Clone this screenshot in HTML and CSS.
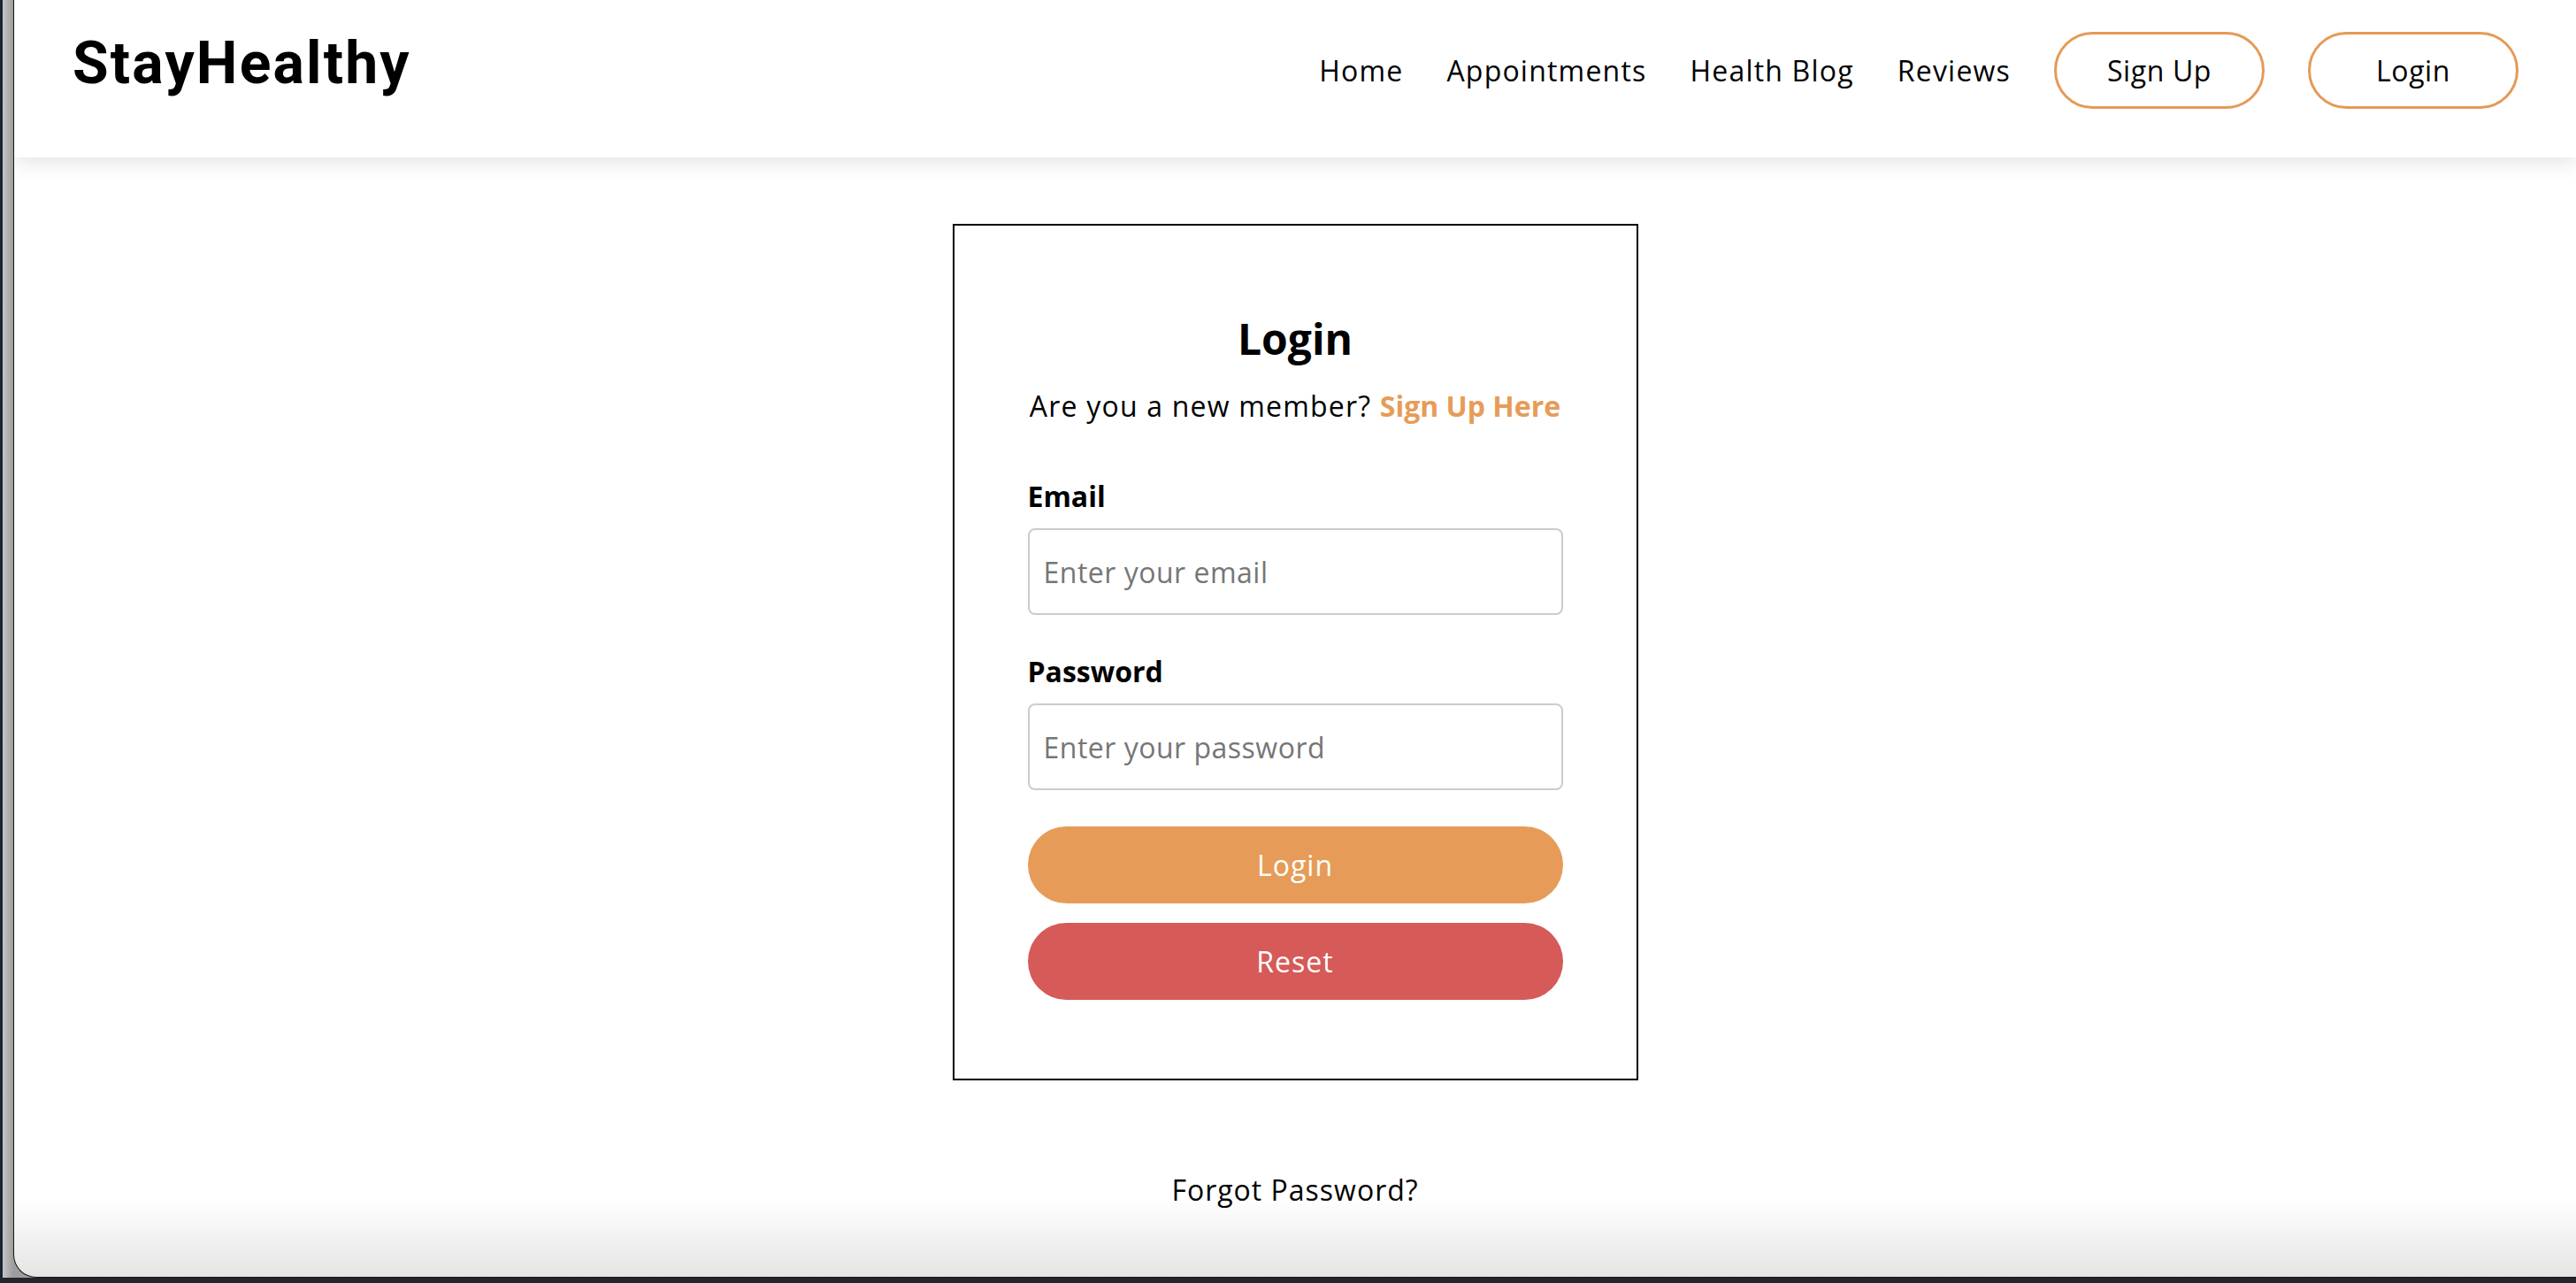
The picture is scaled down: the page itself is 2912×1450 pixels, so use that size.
FILE: index.html
```html
<!DOCTYPE html>
<html lang="en">
<head>
<meta charset="utf-8">
<title>StayHealthy - Login</title>
<link rel="stylesheet" href="styles.css">
</head>
<body>
<div class="screen">
  <div class="window">
    <nav class="nav">
      <div class="logo">StayHealthy</div>
      <ul class="nav-links">
        <li><a href="#" class="nav-link">Home</a></li>
        <li><a href="#" class="nav-link">Appointments</a></li>
        <li><a href="#" class="nav-link">Health Blog</a></li>
        <li><a href="#" class="nav-link">Reviews</a></li>
        <li><a href="#" class="nav-btn">Sign Up</a></li>
        <li><a href="#" class="nav-btn">Login</a></li>
      </ul>
    </nav>
    <main class="main">
      <div class="card">
        <h2 class="title">Login</h2>
        <p class="sub">Are you a new member? <a href="#" class="sub-link">Sign Up Here</a></p>
        <form class="form">
          <label class="label" for="email">Email</label>
          <input class="input" id="email" type="email" placeholder="Enter your email">
          <label class="label label-pw" for="password">Password</label>
          <input class="input" id="password" type="password" placeholder="Enter your password">
          <button type="button" class="btn btn-login">Login</button>
          <button type="reset" class="btn btn-reset">Reset</button>
        </form>
      </div>
      <a href="#" class="forgot">Forgot Password?</a>
    </main>
  </div>
</div>
</body>
</html>
```
FILE: styles.css
```css
html, body {
  margin: 0;
  padding: 0;
}
body {
  background: #23252c;
  height: 1450px;
  overflow: hidden;
  font-family: "Open Sans", "Noto Sans", sans-serif;
  color: #000;
}
.screen {
  display: flex;
  height: 1444px;
  background: linear-gradient(to right, #1b2436 0, #1b2436 3px, #c6c6c6 3px, #9d9d9d 15px);
}
.window {
  flex: 1;
  margin-left: 15px;
  border-left: 1px solid #151515;
  border-bottom: 1px solid #151515;
  border-bottom-left-radius: 26px;
  overflow: hidden;
  background: linear-gradient(to bottom, #fff 0, #fff 1355px, #e4e4e4 1443px);
  display: flex;
  flex-direction: column;
}
.nav {
  height: 178px;
  box-sizing: border-box;
  padding: 36px 65px 0 66px;
  display: flex;
  justify-content: space-between;
  align-items: flex-start;
  background: #fff;
  box-shadow: 0 6px 22px rgba(0, 0, 0, 0.11);
  position: relative;
  z-index: 1;
}
.logo {
  font-family: Roboto, "Liberation Sans", sans-serif;
  font-weight: 700;
  font-size: 66px;
  line-height: 64px;
  letter-spacing: 2.2px;
  margin-top: 4px;
}
.nav-links {
  list-style: none;
  margin: 0;
  padding: 0;
  display: flex;
  align-items: center;
  gap: 49px;
  height: 87px;
}
.nav-link {
  color: #000;
  text-decoration: none;
  font-size: 32px;
  letter-spacing: 1.2px;
  line-height: 44px;
  display: block;
}
.nav-btn {
  display: flex;
  align-items: center;
  justify-content: center;
  box-sizing: border-box;
  width: 238px;
  height: 87px;
  border: 3px solid #e59a55;
  border-radius: 44px;
  color: #000;
  text-decoration: none;
  font-size: 32px;
  letter-spacing: 0.6px;
}
.main {
  flex: 1;
  display: flex;
  flex-direction: column;
  align-items: center;
  padding-top: 75px;
}
.card {
  width: 775px;
  box-sizing: border-box;
  border: 2px solid #000;
  padding: 96px 83px 89px;
}
.title {
  margin: 0;
  text-align: center;
  font-size: 48px;
  line-height: 64px;
  font-weight: 700;
}
.sub {
  margin: 22px 0 0;
  text-align: center;
  font-size: 32px;
  line-height: 44px;
  letter-spacing: 1.2px;
  white-space: nowrap;
}
.sub-link {
  color: #e69c58;
  font-weight: 700;
  text-decoration: none;
  letter-spacing: 0;
}
.form {
  display: flex;
  flex-direction: column;
  margin-top: 58px;
}
.label {
  font-size: 32px;
  line-height: 44px;
  font-weight: 700;
}
.label-pw {
  margin-top: 42px;
}
.input {
  margin-top: 14px;
  height: 98px;
  box-sizing: border-box;
  border: 2px solid #cccccc;
  border-radius: 8px;
  padding: 0 16px;
  font-family: "Open Sans", "Noto Sans", sans-serif;
  font-size: 32px;
  letter-spacing: 0.5px;
  color: #000;
  background: #fff;
  outline: none;
}
.input::placeholder {
  color: #767676;
}
.btn {
  height: 87px;
  border: none;
  border-radius: 44px;
  color: #fff;
  font-family: "Open Sans", "Noto Sans", sans-serif;
  font-size: 32px;
  letter-spacing: 1px;
  cursor: pointer;
}
.btn-login {
  margin-top: 41px;
  background: #e69c58;
}
.btn-reset {
  margin-top: 22px;
  background: #d55a58;
}
.forgot {
  margin-top: 102px;
  font-size: 32px;
  line-height: 44px;
  letter-spacing: 1px;
  color: #000;
  text-decoration: none;
}
```
